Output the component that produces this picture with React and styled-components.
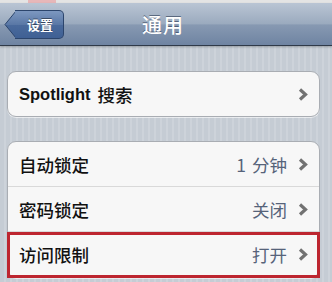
import React from "react";
import styled, { createGlobalStyle } from "styled-components";

const Global = createGlobalStyle`
  html, body { margin: 0; padding: 0; }
  body {
    width: 332px;
    height: 282px;
    overflow: hidden;
    font-family: "Liberation Sans", "Noto Sans CJK SC", sans-serif;
    background: #c7ced6;
  }
`;

const Screen = styled.div`
  width: 332px;
  height: 282px;
  display: flex;
  flex-direction: column;
  overflow: hidden;
`;

const StatusStrip = styled.div`
  height: 3px;
  background: linear-gradient(90deg, #e4e4e4 0 28px, #e7b7b9 28px 56px, #e4e4e4 56px);
`;

const NavBar = styled.div`
  height: 42px;
  flex: none;
  display: flex;
  align-items: center;
  position: relative;
  background: linear-gradient(180deg, #bac5d4 0%, #9aaabe 50%, #8799b2 52%, #6f84a2 100%);
  border-bottom: 1px solid #2f3a49;
  box-shadow: 0 1px 2px rgba(0, 0, 0, 0.25);
  z-index: 1;
`;

const BackButton = styled.div`
  position: absolute;
  left: 4px;
  top: 7px;
  height: 29px;
  display: flex;
  align-items: center;
`;

const BackBody = styled.div`
  height: 27px;
  padding: 0 10px 0 12px;
  margin-left: -1px;
  display: flex;
  align-items: center;
  background: linear-gradient(180deg, #7d98c0 0%, #5a78a6 50%, #4a6a9c 52%, #3f6094 100%);
  border: 1px solid #2c456c;
  border-left: none;
  border-radius: 0 5px 5px 0;
  color: #fff;
  font-family: "Noto Sans CJK SC", sans-serif;
  font-weight: 700;
  font-size: 13px;
  text-shadow: 0 -1px 0 rgba(0, 0, 0, 0.45);
`;

const Title = styled.div`
  flex: 1;
  text-align: center;
  padding-right: 6px;
  color: #fff;
  font-family: "Noto Sans CJK SC", sans-serif;
  font-weight: 500;
  font-size: 20px;
  letter-spacing: 1px;
  text-shadow: 0 -1px 0 rgba(40, 55, 80, 0.6);
`;

const Content = styled.div`
  flex: 1;
  display: flex;
  flex-direction: column;
  gap: 24px;
  padding: 25px 12px 0 7px;
  background: repeating-linear-gradient(
    90deg,
    #c5ccd4 0px,
    #c5ccd4 4px,
    #cdd3da 4px,
    #cdd3da 6px
  );
`;

const Card = styled.div`
  background: #f7f7f7;
  border: 1px solid #a9adb3;
  border-radius: 9px;
  display: flex;
  flex-direction: column;
  box-shadow: 0 1px 0 rgba(255, 255, 255, 0.6);
`;

const Row = styled.div`
  height: ${(p) => p.$h || 44}px;
  display: flex;
  align-items: center;
  padding: 0 11px 0 11px;
  position: relative;
  & + & {
    border-top: 1px solid #d9d9d9;
  }
  ${(p) =>
    p.$marked &&
    `
    &::after {
      content: "";
      position: absolute;
      left: -1px;
      right: -1px;
      top: 0px;
      bottom: -1px;
      border: 3px solid #bd2630;
      pointer-events: none;
    }
  `}
`;

const Label = styled.div`
  flex: 1;
  font-family: "Noto Sans CJK SC", sans-serif;
  font-weight: 500;
  font-size: 17.5px;
  color: #111;
  display: flex;
  align-items: center;
  gap: 7px;
`;

const Strong = styled.span`
  font-family: "Liberation Sans", sans-serif;
  font-weight: 700;
  font-size: 16.5px;
`;

const Value = styled.div`
  font-family: "Noto Sans CJK SC", sans-serif;
  font-size: 17.5px;
  color: #56637a;
  margin-right: 11px;
  display: flex;
  gap: 6px;
`;

const Chevron = () => (
  <svg width="10" height="13" viewBox="0 0 10 13">
    <polyline
      points="2,1.5 7.5,6.5 2,11.5"
      fill="none"
      stroke="#727272"
      strokeWidth="3.2"
    />
  </svg>
);

const BackArrow = () => (
  <svg width="12" height="29" viewBox="0 0 12 29">
    <defs>
      <linearGradient id="bg" x1="0" y1="0" x2="0" y2="1">
        <stop offset="0" stopColor="#7d98c0" />
        <stop offset="0.5" stopColor="#5a78a6" />
        <stop offset="0.52" stopColor="#4a6a9c" />
        <stop offset="1" stopColor="#3f6094" />
      </linearGradient>
    </defs>
    <polygon points="12,1 1,14.5 12,28" fill="url(#bg)" />
    <polyline points="12,1 1,14.5 12,28" fill="none" stroke="#2c456c" strokeWidth="1" />
  </svg>
);

export default function App() {
  return (
    <Screen>
      <Global />
      <StatusStrip />
      <NavBar>
        <BackButton>
          <BackArrow />
          <BackBody>设置</BackBody>
        </BackButton>
        <Title>通用</Title>
      </NavBar>
      <Content>
        <Card>
          <Row $h={44}>
            <Label>
              <Strong>Spotlight</Strong>搜索
            </Label>
            <Chevron />
          </Row>
        </Card>
        <Card>
          <Row>
            <Label>自动锁定</Label>
            <Value>
              <span>1</span>
              <span>分钟</span>
            </Value>
            <Chevron />
          </Row>
          <Row>
            <Label>密码锁定</Label>
            <Value>关闭</Value>
            <Chevron />
          </Row>
          <Row $marked $h={45}>
            <Label>访问限制</Label>
            <Value>打开</Value>
            <Chevron />
          </Row>
        </Card>
      </Content>
    </Screen>
  );
}
